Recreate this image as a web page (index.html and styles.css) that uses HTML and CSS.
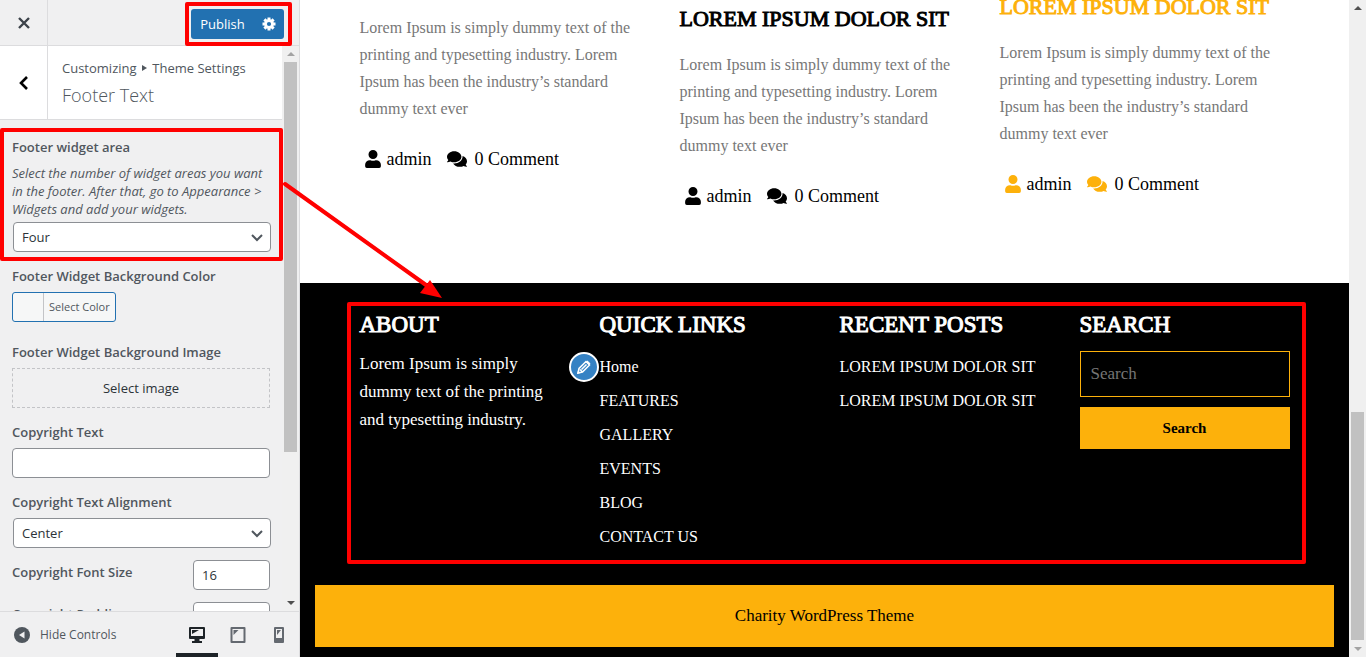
FILE: index.html
```
<!DOCTYPE html>
<html lang="en">
<head>
<meta charset="utf-8">
<title>Customize: Footer Text</title>
<link rel="stylesheet" href="styles.css">
</head>
<body>
<svg class="sprite" aria-hidden="true">
  <symbol id="user" viewBox="0 0 448 512"><path fill="currentColor" d="M224 256a128 128 0 1 0 0-256 128 128 0 0 0 0 256zm90 32h-17a174 174 0 0 1-146 0h-17A134 134 0 0 0 0 422v42a48 48 0 0 0 48 48h352a48 48 0 0 0 48-48v-42a134 134 0 0 0-134-134z"/></symbol>
  <symbol id="comments" viewBox="0 0 576 512"><path fill="currentColor" d="M416 192c0-88-93-160-208-160S0 104 0 192c0 34 14 66 38 92-14 30-35 54-36 54a8 8 0 0 0 6 14c37 0 67-12 89-25 33 16 71 25 111 25 115 0 208-72 208-160zm122 220c24-26 38-58 38-92 0-67-54-124-130-148 1 7 2 13 2 20 0 106-108 192-240 192-11 0-21-1-32-2 32 57 106 98 192 98 41 0 79-9 111-25 22 13 52 25 89 25a8 8 0 0 0 6-14c0 0-22-24-36-54z"/></symbol>
  <symbol id="chevron" viewBox="0 0 12 12"><path d="M1 4l5 5 5-5" fill="none" stroke="#50575e" stroke-width="2"/></symbol>
</svg>
<div class="app">
  <aside class="sidebar">
    <header class="topbar">
      <button class="close" aria-label="Close"><svg width="12" height="12" viewBox="0 0 12 12"><path d="M1 1l10 10M11 1L1 11" stroke="#3c434a" stroke-width="2.4"/></svg></button>
      <div class="publish marked">
        <button class="save">Publish</button>
        <button class="gear" aria-label="Publish settings"><svg width="14" height="14" viewBox="0 0 14 14"><g stroke="#fff" stroke-width="3"><path d="M7 .5v13M.5 7h13M2.4 2.4l9.2 9.2M11.6 2.4l-9.2 9.2"/></g><circle cx="7" cy="7" r="4.8" fill="#fff"/><circle cx="7" cy="7" r="2.1" fill="#2271b1"/></svg></button>
      </div>
    </header>
    <div class="scroller">
      <div class="panel">
        <div class="section-head">
          <button class="back" aria-label="Back"><svg width="10" height="14" viewBox="0 0 10 14"><path d="M8 1L2 7l6 6" fill="none" stroke="#000" stroke-width="2.6"/></svg></button>
          <div class="crumbs"><span>Customizing <i class="tri"></i> Theme Settings</span><h3>Footer Text</h3></div>
        </div>
        <div class="controls">
          <div class="control area">
            <label for="area">Footer widget area</label>
            <p class="hint">Select the number of widget areas you want in the footer. After that, go to Appearance &gt; Widgets and add your widgets.</p>
            <div class="pick"><select id="area"><option>Four</option></select><svg class="chev"><use href="#chevron"/></svg></div>
          </div>
          <div class="control color">
            <label for="color">Footer Widget Background Color</label>
            <button class="swatch" id="color"><span class="chip"></span><span class="chip-text">Select Color</span></button>
          </div>
          <div class="control">
            <label for="image">Footer Widget Background Image</label>
            <button class="image" id="image">Select image</button>
          </div>
          <div class="control">
            <label for="copy">Copyright Text</label>
            <input id="copy" type="text">
          </div>
          <div class="control">
            <label for="align">Copyright Text Alignment</label>
            <div class="pick"><select id="align"><option>Center</option></select><svg class="chev"><use href="#chevron"/></svg></div>
          </div>
          <div class="control row"><label for="size">Copyright Font Size</label><input id="size" type="text" value="16"></div>
          <div class="control row"><label for="pad">Copyright Padding</label><input id="pad" type="text"></div>
        </div>
      </div>
      <div class="bar"><i class="up"></i><i class="thumb"></i><i class="down"></i></div>
    </div>
    <footer class="actions">
      <button class="hide"><svg width="16" height="16" viewBox="0 0 16 16"><circle cx="8" cy="8" r="8" fill="#50575e"/><path d="M10.5 4.5v7L5 8z" fill="#f0f0f1"/></svg>Hide Controls</button>
      <button class="device on" aria-label="Desktop"><svg width="16" height="16" viewBox="0 0 16 16"><path fill="currentColor" fill-rule="evenodd" d="M1 0h14q1 0 1 1v10q0 1-1 1h-4.500v2H13v2H3v-2h2.500v-2H1q-1 0-1-1V1q0-1 1-1zm1 2v7h12V2z"/><path fill="currentColor" d="M3 3h7L3 7z"/></svg></button>
      <button class="device" aria-label="Tablet"><svg width="16" height="16" viewBox="0 0 16 16"><path fill="currentColor" fill-rule="evenodd" d="M1.500 0h13q1 0 1 1v14q0 1-1 1h-13q-1 0-1-1V1q0-1 1-1zm1 2v12h11V2z"/><path fill="currentColor" d="M3.500 3h5l-5 5z"/></svg></button>
      <button class="device" aria-label="Mobile"><svg width="16" height="16" viewBox="0 0 16 16"><path fill="currentColor" fill-rule="evenodd" d="M4 0h8q1 0 1 1v14q0 1-1 1H4q-1 0-1-1V1q0-1 1-1zm1 2v9h6V2z"/><path fill="currentColor" d="M6 3h4L6 8z"/></svg></button>
    </footer>
  </aside>

  <main class="preview">
    <div class="page">
      <section class="posts">
        <div class="container">
          <article class="post first">
            <p>Lorem Ipsum is simply dummy text of the printing and typesetting industry. Lorem Ipsum has been the industry’s standard dummy text ever</p>
            <div class="meta"><svg class="u"><use href="#user"/></svg><span>admin</span><svg class="c"><use href="#comments"/></svg><span>0 Comment</span></div>
          </article>
          <article class="post">
            <h4>LOREM IPSUM DOLOR SIT</h4>
            <p>Lorem Ipsum is simply dummy text of the printing and typesetting industry. Lorem Ipsum has been the industry’s standard dummy text ever</p>
            <div class="meta"><svg class="u"><use href="#user"/></svg><span>admin</span><svg class="c"><use href="#comments"/></svg><span>0 Comment</span></div>
          </article>
          <article class="post accent">
            <h4>LOREM IPSUM DOLOR SIT</h4>
            <p>Lorem Ipsum is simply dummy text of the printing and typesetting industry. Lorem Ipsum has been the industry’s standard dummy text ever</p>
            <div class="meta"><svg class="u"><use href="#user"/></svg><span>admin</span><svg class="c"><use href="#comments"/></svg><span>0 Comment</span></div>
          </article>
        </div>
      </section>
      <footer class="site-footer">
        <div class="container widgets">
          <section class="widget"><h3>ABOUT</h3><p>Lorem Ipsum is simply dummy text of the printing and typesetting industry.</p></section>
          <section class="widget links"><h3>QUICK LINKS</h3>
            <button class="edit" aria-label="Edit menu"><svg width="16" height="16" viewBox="0 0 16 16"><path d="M2 14l1-4.500L10 2.500l3.500 3.500-7 7zM4 10.500l2 2M5.500 10.500l5-5" fill="none" stroke="#fff" stroke-width="1.500"/><path d="M10 3l1.500-1.500 3 3L13 6zM1 15l1-3.500L4.500 14z" fill="#fff"/></svg></button>
            <ul><li><a href="#">Home</a></li><li><a href="#">FEATURES</a></li><li><a href="#">GALLERY</a></li><li><a href="#">EVENTS</a></li><li><a href="#">BLOG</a></li><li><a href="#">CONTACT US</a></li></ul></section>
          <section class="widget"><h3>RECENT POSTS</h3>
            <ul><li><a href="#">LOREM IPSUM DOLOR SIT</a></li><li><a href="#">LOREM IPSUM DOLOR SIT</a></li></ul></section>
          <section class="widget"><h3>SEARCH</h3>
            <form class="search"><input type="text" placeholder="Search" aria-label="Search"><button type="button">Search</button></form></section>
        </div>
        <div class="copyright">Charity WordPress Theme</div>
      </footer>
    </div>
    <div class="bar page-bar"><i class="up dark"></i><i class="thumb"></i><i class="down light"></i></div>
  </main>
  <svg class="arrow" width="160" height="118" viewBox="0 0 160 118" aria-hidden="true"><path d="M3 3L144 104" stroke="#f00" stroke-width="4" stroke-linecap="round"/><path d="M160 117l-22-5 10-13z" fill="#f00"/></svg>
</div>
</body>
</html>
```
FILE: styles.css
```
* { box-sizing: border-box; }
body { margin: 0; font-family: "Open Sans", "Noto Sans", sans-serif; font-size: 13px; color: #50575e; }
button { font: inherit; color: inherit; border: 0; padding: 0; background: none; cursor: pointer; }
h3, h4, p, ul { margin: 0; padding: 0; font-weight: 400; }
ul { list-style: none; }
.sprite { display: none; }
.app { position: relative; display: flex; height: 100vh; overflow: hidden; }

.sidebar { flex: 0 0 300px; display: flex; flex-direction: column; min-height: 0; background: #f0f0f1; border-right: 1px solid #dcdcde; }
.topbar { flex: none; display: flex; justify-content: space-between; align-items: center; height: 46px; padding-right: 15px; border-bottom: 1px solid #dcdcde; }
.close { display: grid; place-items: center; width: 48px; height: 45px; border-right: 1px solid #dcdcde; }
.publish { position: relative; display: flex; height: 30px; margin-top: 2px; border-radius: 3px; background: #2271b1; color: #fff; }
.save { width: 63px; }
.gear { display: grid; place-items: center; width: 30px; }
.marked::after, .area::after, .widgets::after { content: ""; position: absolute; border: 4px solid #f00; border-radius: 2px; pointer-events: none; }
.marked::after { inset: -7px -8px -7px -6px; }

.scroller { flex: 1; display: flex; min-height: 0; overflow: hidden; }
.panel { flex: 1; min-width: 0; }
.section-head { display: flex; height: 74px; background: #fff; border-bottom: 1px solid #dcdcde; }
.back { display: grid; place-items: center; width: 48px; border-right: 1px solid #dcdcde; }
.crumbs { padding: 12px 0 0 14px; line-height: 20px; }
.crumbs h3 { font-size: 18px; font-weight: 300; line-height: 34px; }
.tri { display: inline-block; margin: 0 2px 2px; border-left: 5px solid #50575e; border-top: 3px solid transparent; border-bottom: 3px solid transparent; }
.controls { display: flex; flex-direction: column; gap: 12px; padding: 15px 12px 0; }
.control { display: flex; flex-direction: column; gap: 4px; }
.control label { font-weight: 600; line-height: 24px; }
.area { position: relative; }
.area::after { inset: -7px -13px -9px -12px; z-index: 1; }
.color { margin-bottom: 6px; }
.hint { padding-top: 1px; font-style: italic; line-height: 18px; }
.pick { position: relative; margin: 0 -1px 0 1px; }
.chev { position: absolute; right: 8px; top: 9px; width: 12px; height: 12px; pointer-events: none; }
.control input, .pick select { width: 100%; height: 30px; padding: 0 8px; border: 1px solid #8c8f94; border-radius: 4px; background: #fff; color: #2c3338; font: inherit; appearance: none; }
.swatch { align-self: flex-start; display: flex; height: 30px; border: 1px solid #2271b1; border-radius: 3px; background: #f6f7f7; font-size: 11px; line-height: 28px; }
.chip { width: 31px; height: 28px; border-right: 1px solid #c3c4c7; }
.chip-text { padding: 0 5px; }
.image { height: 40px; border: 1px dashed #c3c4c7; color: #2c3338; }
.control.row { flex-direction: row; justify-content: space-between; }
.control.row input { width: 77px; }

.bar { flex: 0 0 17px; display: flex; flex-direction: column; align-items: center; background: #f0f0f0; }
.up, .down { flex: none; margin: 6px 0; border-left: 4px solid transparent; border-right: 4px solid transparent; }
.up { border-bottom: 4px solid #a3a3a3; }
.down { border-top: 4px solid #505050; margin-top: auto; }
.up.dark { border-bottom-color: #505050; }
.down.light { border-top-color: #a3a3a3; }
.thumb { width: 13px; height: 69%; background: #c1c1c1; }

.actions { position: relative; flex: none; display: flex; align-items: center; height: 46px; border-top: 1px solid #dcdcde; background: #f0f0f1; }
.hide { display: flex; align-items: center; gap: 10px; flex: 1; padding-left: 14px; font-size: 12px; }
.device { display: grid; place-items: center; width: 42px; height: 45px; margin-right: -1px; left: 1px; color: #646970; border-bottom: 4px solid transparent; padding-top: 4px; }
.device.on { color: #1d2327; border-color: #1d2327; }

.preview { flex: 1; display: flex; min-width: 0; background: #fff; font-family: "Liberation Serif", serif; font-size: 16px; }
.page { flex: 1; display: flex; flex-direction: column; min-width: 0; overflow: hidden; }
.posts { flex: 1; display: flex; align-items: flex-end; min-height: 0; padding-bottom: 73px; }
.container { flex: 1; display: flex; align-items: flex-end; max-width: 960px; margin: 0 auto; }
.post { flex: 1; padding: 0 15px; color: #000; }
.post.first { margin-bottom: 37px; }
.post.accent { margin-bottom: 12px; }
.post h4 { font-size: 22px; line-height: 28px; margin-bottom: 18px; white-space: nowrap; -webkit-text-stroke: 1px; }
.post p { color: #777; line-height: 27px; }
.post.accent h4, .accent svg { color: #fdb10b; }
.meta { display: flex; align-items: center; margin-top: 23px; padding-left: 4px; font-size: 18px; line-height: 28px; }
.meta .u { width: 18px; height: 18px; margin-right: 5px; }
.meta .c { width: 20px; height: 18px; margin: 0 8px 0 15px; }

.site-footer { flex: none; padding: 28px 15px 10px; background: #000; color: #fff; }
.widgets { position: relative; align-items: flex-start; margin-bottom: 31px; }
.widgets::after { inset: -9px -1px -10px 2px; }
.widget { flex: 1; padding: 0 15px; min-width: 0; }
.widget h3 { font-size: 23px; line-height: 28px; margin-bottom: 11px; white-space: nowrap; -webkit-text-stroke: 1px; }
.widget p { padding-right: 16px; font-size: 17px; line-height: 28px; }
.widget li { line-height: 34px; white-space: nowrap; }
.widget a { color: inherit; text-decoration: none; }
.links { position: relative; }
.edit { position: absolute; left: -16px; top: 41px; display: grid; place-items: center; width: 30px; height: 30px; border: 2px solid #fff; border-radius: 50%; background: #3582c4; }
.search { display: flex; flex-direction: column; gap: 10px; padding-top: 1px; }
.search input { width: 100%; height: 46px; padding: 0 10px; border: 1px solid #fdb10b; background: #000; color: #fff; font: inherit; font-size: 17px; }
.search input::placeholder { color: #757575; }
.search button { height: 42px; background: #fdb10b; color: #000; font-size: 15px; font-weight: 700; }
.copyright { background: #fdb10b; color: #000; font-size: 17px; text-align: center; line-height: 62px; }
.page-bar .up { margin-bottom: auto; }
.page-bar .thumb { height: 228px; }
.page-bar .down { margin-top: 7px; }
.arrow { position: absolute; left: 282px; top: 181px; pointer-events: none; }
```
